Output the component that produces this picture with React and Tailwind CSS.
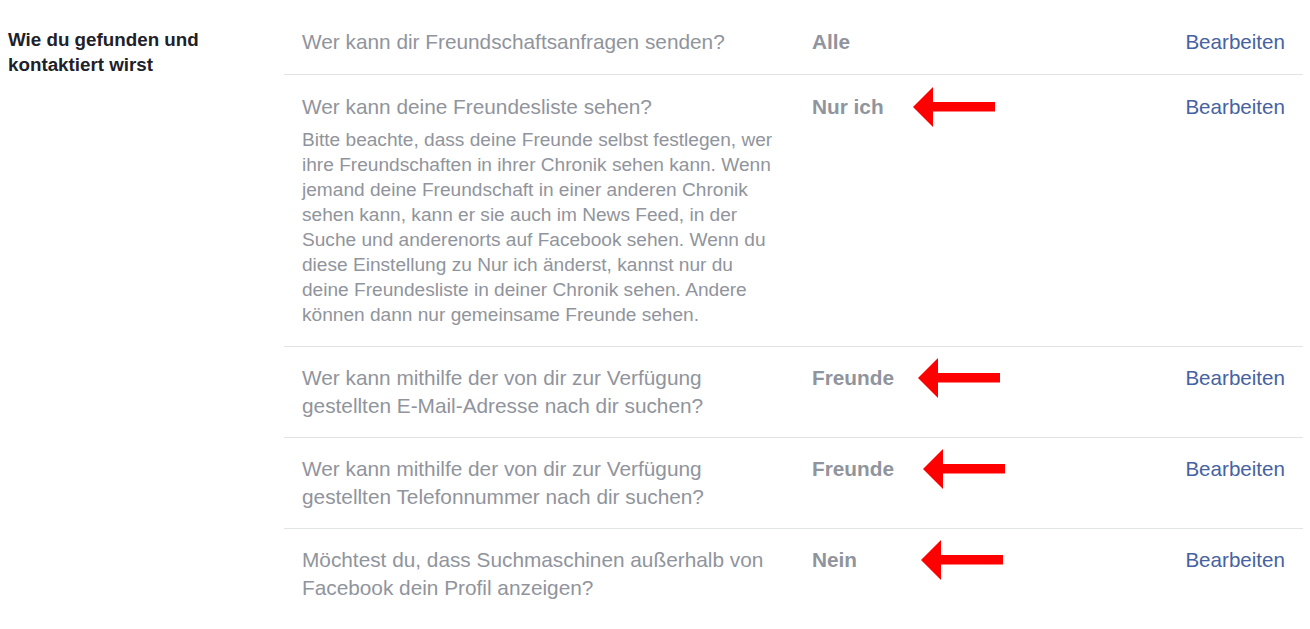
import React from "react";

const Arrow = ({ left }) => (
  <svg
    className="absolute top-1/2 -translate-y-1/2"
    style={{ left }}
    width="84"
    height="42"
    viewBox="0 0 84 42"
  >
    <polygon points="0,21 20,1 20,16 82,16 82,25.5 20,25.5 20,41" fill="#ff0000" />
  </svg>
);

const Row = ({ title, desc, value, arrow, last, pad }) => (
  <div
    className={`grid grid-cols-[510px_1fr_auto] pl-[18px] pr-[18px] ${pad} ${
      last ? "" : "border-b border-[#e3e4e7]"
    }`}
  >
    <div className="w-[478px]">
      <div className="text-[20.8px] leading-[28px] text-[#90949c]">{title}</div>
      {desc && (
        <div className="mt-[6px] text-[19.1px] leading-[25px] text-[#90949c]">{desc}</div>
      )}
    </div>
    <div className="relative h-[28px]">
      <span className="text-[20.8px] leading-[28px] font-bold text-[#90949c]">{value}</span>
      {arrow !== undefined && <Arrow left={arrow} />}
    </div>
    <div className="text-[20.6px] leading-[28px] text-[#4662a0]">Bearbeiten</div>
  </div>
);

export default function App() {
  return (
    <div
      className="w-[1310px] h-[629px] bg-white flex pt-[10px]"
      style={{ fontFamily: '"Liberation Sans", Arial, sans-serif' }}
    >
      <div className="w-[284px] shrink-0 pl-[8px] pt-[17px]">
        <div className="text-[18.8px] leading-[25px] font-bold text-[#1d2129]">
          Wie du gefunden und
          <br />
          kontaktiert wirst
        </div>
      </div>
      <div className="w-[1019px]">
        <Row
          title="Wer kann dir Freundschaftsanfragen senden?"
          value="Alle"
          pad="pt-[18px] pb-[18px]"
        />
        <Row
          title="Wer kann deine Freundesliste sehen?"
          desc="Bitte beachte, dass deine Freunde selbst festlegen, wer ihre Freundschaften in ihrer Chronik sehen kann. Wenn jemand deine Freundschaft in einer anderen Chronik sehen kann, kann er sie auch im News Feed, in der Suche und anderenorts auf Facebook sehen. Wenn du diese Einstellung zu Nur ich änderst, kannst nur du deine Freundesliste in deiner Chronik sehen. Andere können dann nur gemeinsame Freunde sehen."
          value="Nur ich"
          arrow={101}
          pad="pt-[18px] pb-[19px]"
        />
        <Row
          title="Wer kann mithilfe der von dir zur Verfügung gestellten E-Mail-Adresse nach dir suchen?"
          value="Freunde"
          arrow={106}
          pad="pt-[17px] pb-[17px]"
        />
        <Row
          title="Wer kann mithilfe der von dir zur Verfügung gestellten Telefonnummer nach dir suchen?"
          value="Freunde"
          arrow={111}
          pad="pt-[17px] pb-[17px]"
        />
        <Row
          title="Möchtest du, dass Suchmaschinen außerhalb von Facebook dein Profil anzeigen?"
          value="Nein"
          arrow={109}
          pad="pt-[17px] pb-[17px]"
          last
        />
      </div>
    </div>
  );
}
